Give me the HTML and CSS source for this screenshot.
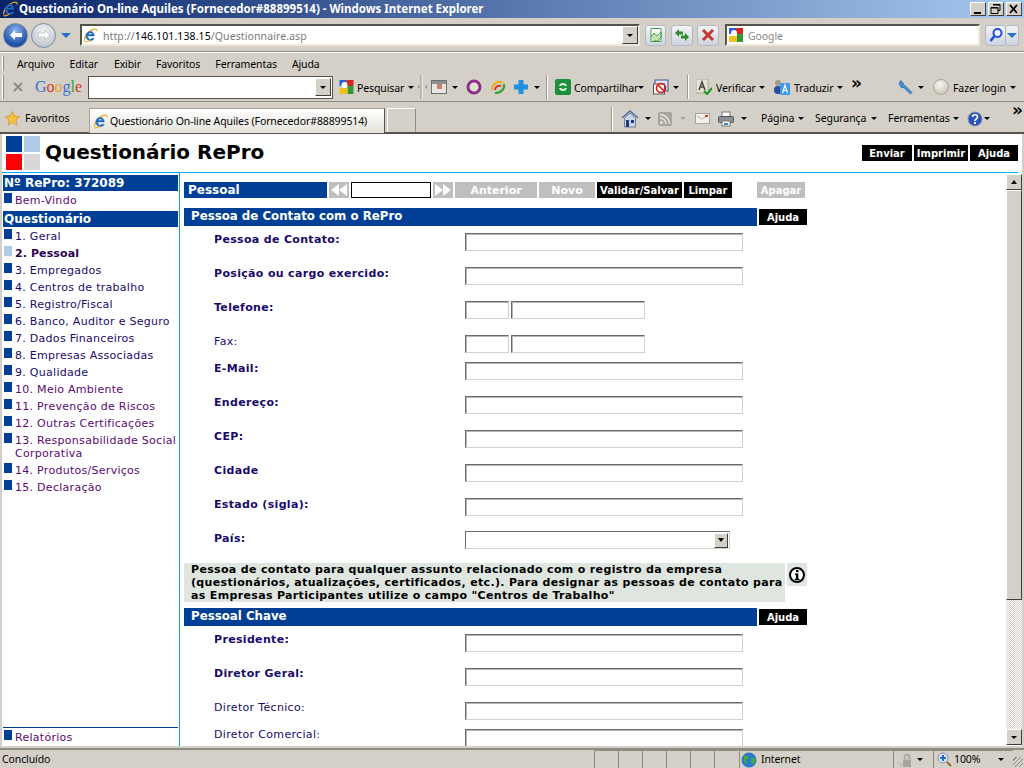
FILE: index.html
```html
<!doctype html>
<html>

<head>
	<meta charset=utf-8>
	<title>Questionário On-line Aquiles (Fornecedor#88899514) - Windows Internet Explorer</title>
	<meta name=viewport content="width=device-width, initial-scale=1">
	<link rel="stylesheet" href="styles.css">
</head>

<body>
	<svg class="defs" width="0" height="0">
		<symbol id="ie" viewBox="0 0 16 16">
			<path d="M2 13.5C.5 11 5 3.5 11 1.5c2.500-.8 4.300-.3 4 2" fill="none" stroke="#e9a81f" stroke-width="1.300"/>
			<path d="M3.500 8.500h8.500c0-3-1.800-4.800-4.300-4.800S3 5.800 3 8.600s2 5 4.800 5c2 0 3.500-1 4.200-2.600H9.400c-.4.700-1 1-1.700 1-1.300 0-2.200-1-2.200-2.500zM5.600 7c.2-1.100 1-1.700 2.100-1.700S9.600 5.900 9.800 7z" fill="#2470c8" stroke="#12509c" stroke-width=".4"/>
			<path d="M1.500 14.500c1.500 1 4-.2 6-1.400" fill="none" stroke="#e9a81f" stroke-width="1.200"/>
		</symbol>
		<symbol id="gicon" viewBox="0 0 16 16">
			<rect x="1" y="1" width="7" height="6" fill="#2a5fd8"/>
			<rect x="8" y="1" width="7" height="6" fill="#d8261c"/>
			<rect x="9" y="7" width="6" height="8" fill="#2e9a34"/>
			<rect x="1" y="9" width="8" height="6" fill="#f2c01e"/>
			<circle cx="6" cy="6" r="3" fill="#fff"/>
		</symbol>
	</svg>

	<header class="titlebar">
		<svg class="ie-title"><use href="#ie"/></svg>
		<span class="titlebar-text">Questionário On-line Aquiles (Fornecedor#88899514) - Windows Internet Explorer</span>
		<div class="winbtns">
			<button class="winbtn"><svg width="16" height="14"><rect x="4" y="10" width="7" height="2"/></svg></button>
			<button class="winbtn"><svg width="16" height="14"><path d="M5 2.500h7v6h-2M3 5.500h7v6H3z" fill="none" stroke="#000" stroke-width="1"/><path d="M5 3h7M3 6h7" stroke="#000"/></svg></button>
			<button class="winbtn"><svg width="16" height="14"><path d="M4 3l7 8M11 3l-7 8" stroke="#000" stroke-width="1.800"/></svg></button>
		</div>
	</header>

	<div class="addressbar">
		<div class="navround back"><svg width="16" height="16" viewBox="0 0 16 16"><path d="M2 8l5-5v3h7v4H7v3z" fill="#fff"/></svg></div>
		<div class="navround forward"><svg width="16" height="16" viewBox="0 0 16 16"><path d="M14 8L9 3v3H2v4h7v3z" fill="#fff" stroke="#a9adb5" stroke-width=".6"/></svg></div>
		<span class="caret caret-blue g5"></span>
		<div class="urlbox g9">
			<svg class="page-ie"><use href="#ie"/></svg>
			<span class="url">http://<b>146.101.138.15</b>/Questionnaire.asp</span>
			<span class="combo-btn"><span class="caret"></span></span>
		</div>
		<div class="pill g5"><svg width="16" height="16" viewBox="0 0 16 16"><path d="M3 1.500h10v13H3z" fill="#fff" stroke="#4b9c4b"/><path d="M3 10l3-4 3 3 4-4v5l-3 4H5" fill="#bfe6b2" stroke="#2d8a2d" stroke-width=".8"/></svg></div>
		<div class="pill pill-wide g5"><svg width="18" height="16" viewBox="0 0 18 16"><path d="M2 6l4-4v2.500h4v3H6V10zM16 10l-4 4v-2.500H8v-3h4V6z" fill="#2e8b2e"/></svg></div>
		<div class="pill pill-wide g4"><svg width="14" height="14" viewBox="0 0 14 14"><path d="M2 2l10 10M12 2L2 12" stroke="#c0392b" stroke-width="3"/></svg></div>
		<div class="searchbox g6">
			<svg class="gicon-s"><use href="#gicon"/></svg>
			<span class="searchhint">Google</span>
		</div>
		<div class="pill g5"><svg width="16" height="16" viewBox="0 0 16 16"><circle cx="9.500" cy="6" r="4" fill="#fff" stroke="#1d50d8" stroke-width="2"/><path d="M6.500 9l-4 5" stroke="#1d50d8" stroke-width="2.500"/></svg></div>
		<div class="pill pill-arrow"><span class="caret caret-blue"></span></div>
	</div>

	<nav class="toolbar menubar">
		<span class="grip"></span>
		<a class="menu-item">Arquivo</a>
		<a class="menu-item">Editar</a>
		<a class="menu-item">Exibir</a>
		<a class="menu-item">Favoritos</a>
		<a class="menu-item">Ferramentas</a>
		<a class="menu-item">Ajuda</a>
	</nav>

	<div class="toolbar gbar">
		<span class="grip"></span>
		<svg class="g9" width="10" height="10" viewBox="0 0 10 10"><path d="M1 1l8 8M9 1L1 9" stroke="#8c8c84" stroke-width="2"/></svg>
		<span class="glogo g12"><i class="c-b">G</i><i class="c-r">o</i><i class="c-y">o</i><i class="c-b">g</i><i class="c-g">l</i><i class="c-r">e</i></span>
		<div class="gsearch g5"><span class="combo-btn"><span class="caret"></span></span></div>
		<svg class="ic g5" width="17" height="16"><use href="#gicon"/></svg>
		<span class="tb-text w48 g2">Pesquisar</span>
		<span class="caret g3"></span>
		<svg class="g4" width="9" height="24" viewBox="0 0 9 24"><path d="M4 0v24" stroke="#fff"/><path d="M3 0v24" stroke="#9c988f"/><path d="M2 12l-2-2v4zM7 12l2-2v4z" fill="#8c8c84"/></svg>
		<svg class="ic g4" width="16" height="16" viewBox="0 0 16 16"><rect x=".5" y="1.500" width="15" height="13" fill="#e8e6e1" stroke="#6f6f6f"/><rect x="1" y="2" width="14" height="3" fill="#8b8f96"/><rect x="6" y="5" width="5" height="5" fill="#c97f6a"/></svg>
		<span class="caret g5"></span>
		<svg class="g8" width="16" height="16" viewBox="0 0 16 16"><circle cx="8" cy="8" r="6" fill="#e6e0cf" stroke="#8c2e8c" stroke-width="3"/></svg>
		<svg class="g8" width="16" height="16" viewBox="0 0 16 16"><path d="M2 11C2 5 8 1 13 4" fill="none" stroke="#e8b21e" stroke-width="2.200"/><path d="M14 5c1 5-3 9-9 9" fill="none" stroke="#3aa03a" stroke-width="2.200"/><path d="M5 11c0-3 3-5 6-4" fill="none" stroke="#d8362a" stroke-width="2"/></svg>
		<svg class="g7" width="16" height="16" viewBox="0 0 16 16"><path d="M5.500 1h5v4.500H15v5h-4.500V15h-5v-4.500H1v-5h4.500z" fill="#1f8fe0"/></svg>
		<span class="caret g5"></span>
		<span class="sep g6"></span>
		<svg class="g7" width="16" height="16" viewBox="0 0 16 16"><rect width="16" height="16" rx="2" fill="#1c8f3a"/><circle cx="8" cy="8" r="3" fill="none" stroke="#d8f2d8" stroke-width="2"/><path d="M1 8h14" stroke="#1c8f3a" stroke-width="2"/></svg>
		<span class="tb-text w61 g3">Compartilhar</span>
		<span class="caret g3"></span>
		<svg class="g9" width="16" height="16" viewBox="0 0 16 16"><rect x="2" y="1" width="13" height="11" fill="#dfe5f2" stroke="#39528f"/><rect x=".5" y="5" width="11" height="10" fill="#fff" stroke="#555"/><circle cx="8" cy="9" r="4.500" fill="none" stroke="#e01818" stroke-width="1.600"/><path d="M5 6l6 6" stroke="#e01818" stroke-width="1.600"/></svg>
		<span class="caret g4"></span>
		<span class="sep g8"></span>
		<svg class="g7" width="16" height="16" viewBox="0 0 16 16"><rect y="0" width="12" height="14" fill="#e6e3d6" stroke="#a8a596"/><path d="M3 11l3-8 3 8M4 8h4" fill="none" stroke="#45453f" stroke-width="1.500"/><path d="M8 12l3 3 5-6" fill="none" stroke="#239a23" stroke-width="2.200"/></svg>
		<span class="tb-text w38 g4">Verificar</span>
		<span class="caret g5"></span>
		<svg class="g9" width="16" height="16" viewBox="0 0 16 16"><circle cx="4" cy="4" r="3" fill="#a09a88"/><circle cx="4" cy="11" r="4" fill="#234d9c"/><rect x="6" y="4" width="10" height="12" rx="1" fill="#3d9ae8"/><path d="M8.500 14l2.500-8 2.500 8M9.500 11.500h3" fill="none" stroke="#fff" stroke-width="1.200"/></svg>
		<span class="tb-text w38 g4">Traduzir</span>
		<span class="caret g5"></span>
		<span class="chev g8">»</span>
		<svg class="g35" width="16" height="16" viewBox="0 0 16 16"><path d="M2.500 1.500l3 2.500-.5 2 2 .5 7 7-1.500 1.500-7-6.500-2 .5L1 5z" fill="#3f8fd8" stroke="#20609c" stroke-width=".6"/></svg>
		<span class="caret g4"></span>
		<span class="avatar g9"></span>
		<span class="tb-text w52 g4">Fazer login</span>
		<span class="caret g5"></span>
	</div>

	<div class="toolbar tabbar">
		<svg class="star" width="15" height="15" viewBox="0 0 15 15"><path d="M7.500.5l2.200 4.600 5 .6-3.700 3.400 1 5-4.500-2.500L3 14.100l1-5L.3 5.700l5-.6z" fill="#f6c23c" stroke="#c8912a" stroke-width=".7"/></svg>
		<span class="tb-text w45 g5">Favoritos</span>
		<div class="tab g19"><svg class="page-ie"><use href="#ie"/></svg><span>Questionário On-line Aquiles (Fornecedor#88899514)</span></div>
		<div class="tab-new"></div>
		<span class="sep sep-tall g195"></span>
		<svg class="g9" width="16" height="18" viewBox="0 0 16 18"><path d="M0 8l8-7 8 7" fill="none" stroke="#4a6fa8" stroke-width="1.500"/><path d="M2.500 8v9h11V8L8 3z" fill="#c9d4e6" stroke="#4a5f80" stroke-width=".7"/><rect x="4" y="10" width="3" height="7" fill="#1e3f7a"/><rect x="9" y="10" width="3" height="3" fill="#1e3f7a"/></svg>
		<span class="caret g7"></span>
		<svg class="g7" width="14" height="14" viewBox="0 0 14 14"><rect width="14" height="14" rx="2" fill="#a8a59c"/><circle cx="3.500" cy="10.500" r="1.500" fill="#e8e6e0"/><path d="M2 6a6 6 0 0 1 6 6M2 2.500A9.500 9.500 0 0 1 11.500 12" fill="none" stroke="#e8e6e0" stroke-width="1.500"/></svg>
		<span class="caret caret-pale g8"></span>
		<svg class="g9" width="15" height="11" viewBox="0 0 15 11"><rect x=".5" y=".5" width="14" height="10" fill="#f2f0ec" stroke="#a8a59c"/><path d="M2 3l5 3 5-3" fill="none" stroke="#b8b5ac"/><rect x="10" y="2" width="3" height="2" fill="#cc3a30"/></svg>
		<svg class="g8" width="16" height="16" viewBox="0 0 16 16"><rect x="4" y="1" width="8" height="5" fill="#fff" stroke="#777"/><rect x=".5" y="5.500" width="15" height="6" rx="1" fill="#8b8f96" stroke="#555"/><rect x="4" y="10" width="8" height="5" fill="#fff" stroke="#777"/><rect x="6" y="12" width="4" height="2" fill="#3a8ac8"/></svg>
		<span class="caret g7"></span>
		<span class="tb-text w32 g14">Página</span>
		<span class="caret g5"></span>
		<span class="tb-text w51 g11">Segurança</span>
		<span class="caret g5"></span>
		<span class="tb-text w61 g11">Ferramentas</span>
		<span class="caret g4"></span>
		<svg class="g8" width="16" height="16" viewBox="0 0 16 16"><circle cx="8" cy="8" r="7" fill="#2a52b8" stroke="#8a93a8"/><path d="M5.500 6c0-3 5-3 5 0 0 2-2.500 2-2.500 4" fill="none" stroke="#fff" stroke-width="1.700"/><rect x="7" y="11" width="2" height="2" fill="#fff"/></svg>
		<span class="caret g1"></span>
		<span class="chev chev-top g22">»</span>
	</div>

	<div class="page">
		<div class="page-head">
			<div class="logo"><i class="sq-blue"></i><i class="sq-pale"></i><i class="sq-red"></i><i class="sq-grey"></i></div>
			<h1>Questionário RePro</h1>
			<div class="head-btns">
				<a class="btn btn-enviar">Enviar</a>
				<a class="btn btn-imprimir">Imprimir</a>
				<a class="btn btn-ajuda">Ajuda</a>
			</div>
		</div>

		<div class="page-body">
			<aside class="side">
				<div class="side-head">Nº RePro: 372089</div>
				<ul class="side-list side-first">
					<li><a class="link-old">Bem-Vindo</a></li>
				</ul>
				<div class="side-head">Questionário</div>
				<ul class="side-list">
					<li><a>1. Geral</a></li>
					<li class="current"><a>2. Pessoal</a></li>
					<li><a>3. Empregados</a></li>
					<li><a>4. Centros de trabalho</a></li>
					<li><a>5. Registro/Fiscal</a></li>
					<li><a>6. Banco, Auditor e Seguro</a></li>
					<li><a>7. Dados Financeiros</a></li>
					<li><a>8. Empresas Associadas</a></li>
					<li><a>9. Qualidade</a></li>
					<li><a class="link-old">10. Meio Ambiente</a></li>
					<li><a class="link-old">11. Prevenção de Riscos</a></li>
					<li><a class="link-old">12. Outras Certificações</a></li>
					<li><a class="link-old">13. Responsabilidade Social Corporativa</a></li>
					<li><a class="link-old">14. Produtos/Serviços</a></li>
					<li><a class="link-old">15. Declaração</a></li>
				</ul>
				<ul class="side-list side-foot">
					<li><a class="link-old">Relatórios</a></li>
				</ul>
			</aside>

			<main class="main">
				<div class="steps">
					<div class="steps-title">Pessoal</div>
					<a class="btn btn-off step-arrow"><svg width="18" height="12" viewBox="0 0 18 12"><path d="M9 0v12L1 6zM17 0v12L9 6z" fill="#fff"/></svg></a>
					<input class="step-input" type="text">
					<a class="btn btn-off step-arrow"><svg width="18" height="12" viewBox="0 0 18 12"><path d="M1 0v12l8-6zM9 0v12l8-6z" fill="#fff"/></svg></a>
					<a class="btn btn-off step-prev">Anterior</a>
					<a class="btn btn-off step-new">Novo</a>
					<a class="btn step-save">Validar/Salvar</a>
					<a class="btn step-clear">Limpar</a>
					<a class="btn btn-off step-del">Apagar</a>
				</div>

				<div class="sect">
					<h2>Pessoa de Contato com o RePro</h2>
					<a class="btn sect-help">Ajuda</a>
				</div>
				<div class="fields fields-contact">
					<div class="field"><label class="req">Pessoa de Contato:</label><input type="text"></div>
					<div class="field"><label class="req">Posição ou cargo exercido:</label><input type="text"></div>
					<div class="field"><label class="req">Telefone:</label><input class="ddd" type="text"><input class="phone" type="text"></div>
					<div class="field field-short"><label>Fax:</label><input class="ddd" type="text"><input class="phone" type="text"></div>
					<div class="field"><label class="req">E-Mail:</label><input type="text"></div>
					<div class="field"><label class="req">Endereço:</label><input type="text"></div>
					<div class="field"><label class="req">CEP:</label><input type="text"></div>
					<div class="field"><label class="req">Cidade</label><input type="text"></div>
					<div class="field"><label class="req">Estado (sigla):</label><input type="text"></div>
					<div class="field field-select"><label class="req">País:</label><div class="select"><span class="select-btn"><span class="caret caret-small"></span></span></div></div>
				</div>

				<div class="note">
					<p>Pessoa de contato para qualquer assunto relacionado com o registro da empresa (questionários, atualizações, certificados, etc.). Para designar as pessoas de contato para as Empresas Participantes utilize o campo "Centros de Trabalho"</p>
					<div class="note-icon"><svg width="16" height="16" viewBox="0 0 16 16"><circle cx="8" cy="8" r="7" fill="#fff" stroke="#000" stroke-width="2"/><rect x="7" y="3" width="2.400" height="2.200"/><path d="M6 6.500h3.300v5.300h1.200v1.500H5.800v-1.500H7V8H6z"/></svg></div>
				</div>

				<div class="sect sect-second">
					<h2>Pessoal Chave</h2>
					<a class="btn sect-help">Ajuda</a>
				</div>
				<div class="fields fields-key">
					<div class="field"><label class="req">Presidente:</label><input type="text"></div>
					<div class="field"><label class="req">Diretor Geral:</label><input type="text"></div>
					<div class="field field-short"><label>Diretor Técnico:</label><input type="text"></div>
					<div class="field"><label>Diretor Comercial:</label><input type="text"></div>
				</div>
			</main>

			<div class="scroll">
				<span class="scroll-btn"><span class="caret caret-up"></span></span>
				<span class="scroll-thumb"></span>
				<span class="scroll-track"></span>
				<span class="scroll-btn"><span class="caret"></span></span>
			</div>
		</div>
	</div>

	<footer class="status">
		<span class="status-text">Concluído</span>
		<span class="cell"></span><span class="cell"></span><span class="cell"></span><span class="cell"></span><span class="cell"></span><span class="cell"></span>
		<span class="cell cell-zone">
			<svg width="16" height="16" viewBox="0 0 16 16"><circle cx="8" cy="8" r="7.500" fill="#2a78d0"/><path d="M3 4l4-1 1 3-3 2 1 4-3-2zM10 6l4 0 0 4-3 3-1-3z" fill="#4aa83a"/></svg>
			<span>Internet</span>
		</span>
		<span class="cell cell-lock">
			<svg width="16" height="16" viewBox="0 0 16 16"><path d="M1 10l4 4 8-11" fill="none" stroke="#c8c5bc" stroke-width="2.500"/><rect x="6" y="8" width="8" height="7" fill="#a8a59c"/><path d="M7.500 8V5a2.500 2.500 0 0 1 5 0v3" fill="none" stroke="#a8a59c" stroke-width="1.500"/></svg>
			<span class="caret"></span>
		</span>
		<span class="cell cell-zoom">
			<svg width="15" height="15" viewBox="0 0 15 15"><circle cx="6" cy="6" r="5" fill="#dbe9f7" stroke="#7f94b0"/><path d="M6 3v6M3 6h6" stroke="#1f6fd0" stroke-width="2"/><path d="M10 10l4 4" stroke="#a06a2a" stroke-width="2"/></svg>
			<span>100%</span>
			<span class="caret caret-far"></span>
		</span>
		<span class="resize"></span>
	</footer>
</body>
</html>
```

FILE: styles.css
```css
html, body{
	width: 100%;
	height: 100%;
	margin: 0; padding: 0;
	overflow: hidden;
}

*, *:after, *:before{
	box-sizing: border-box;
}

body{
	display: flex;
	flex-direction: column;
	background-color: #d4d0c8;
	color: #000;
	font: 10.500px/13px "Noto Sans", "Liberation Sans", sans-serif;
	letter-spacing: -.1px;
}

.defs{
	position: absolute;
}

svg{
	display: block;
	flex: none;
}

/* spacing between toolbar items */
.g1{ margin-left: 1px; }
.g2{ margin-left: 2px; }
.g3{ margin-left: 3px; }
.g4{ margin-left: 4px; }
.g5{ margin-left: 5px; }
.g6{ margin-left: 6px; }
.g7{ margin-left: 7px; }
.g8{ margin-left: 8px; }
.g9{ margin-left: 9px; }
.g11{ margin-left: 11px; }
.g12{ margin-left: 12px; }
.g14{ margin-left: 14px; }
.g19{ margin-left: 19px; }
.g22{ margin-left: 22px; }
.g35{ margin-left: 35px; }
.g195{ margin-left: 195px; }

.w32{ width: 32px; }
.w38{ width: 38px; }
.w45{ width: 45px; }
.w48{ width: 48px; }
.w51{ width: 51px; }
.w52{ width: 52px; }
.w61{ width: 61px; }

.caret{
	display: block;
	flex: none;
	width: 0; height: 0;
	border-left: 3px solid transparent;
	border-right: 3px solid transparent;
	border-top: 3px solid #000;
}
.caret-blue{
	border-left-width: 5px;
	border-right-width: 5px;
	border-top: 5px solid #2a6fc8;
}
.caret-pale{ border-top-color: #a8a59c; }
.caret-small{
	border-top-width: 4px;
}
.caret-up{
	border-top: 0;
	border-bottom: 4px solid #000;
}

/* title bar */
.titlebar{
	display: flex;
	flex: none;
	align-items: center;
	height: 18px;
	background: linear-gradient(to right, #0a246a, #a6caf0);
	color: #fff;
	font: bold 11.500px/18px "Noto Sans", sans-serif;
	letter-spacing: 0;
}
.ie-title{
	width: 16px; height: 16px;
	margin-left: 2px;
}
.titlebar-text{
	margin-left: 1px;
	white-space: nowrap;
}
.winbtns{
	display: flex;
	gap: 2px;
	margin-left: auto;
	margin-right: 2px;
}
.winbtn{
	width: 16px; height: 14px;
	padding: 0;
	background-color: #d4d0c8;
	border: 1px solid;
	border-color: #fff #404040 #404040 #fff;
}
.winbtn svg{
	margin: -1px;
}

/* address row */
.addressbar{
	display: flex;
	flex: none;
	align-items: center;
	height: 34px;
	padding: 0 0 0 3px;
}
.navround{
	display: flex;
	align-items: center;
	justify-content: center;
	width: 25px; height: 25px;
	border-radius: 50%;
	border: 1px solid #7b8aa0;
}
.back{
	background: radial-gradient(circle at 50% 30%, #8fb5ec, #1d4fa8 70%);
}
.forward{
	margin-left: 3px;
	background: radial-gradient(circle at 50% 30%, #f0f2f4, #b4bcc8);
}
.urlbox{
	display: flex;
	align-items: center;
	width: 560px; height: 22px;
	background-color: #fff;
	border: 2px solid;
	border-color: #55534e #ece9d8 #ece9d8 #55534e;
	color: #7a7a7a;
}
.page-ie{
	width: 15px; height: 15px;
	margin-left: 1px;
}
.url{
	margin-left: 5px;
	margin-top: 2px;
	letter-spacing: .1px;
}
.url b{
	font-weight: normal;
	color: #000;
}
.combo-btn{
	display: flex;
	align-items: center;
	justify-content: center;
	margin-left: auto;
	width: 16px; height: 18px;
	background-color: #d4d0c8;
	border: 1px solid;
	border-color: #fff #404040 #404040 #fff;
}
.pill{
	display: flex;
	align-items: center;
	justify-content: center;
	width: 21px; height: 21px;
	border: 1px solid #b5b8c2;
	border-radius: 3px;
	background: linear-gradient(#f2f3f6, #cdd3e0);
}
.pill-wide{
	width: 22px;
}
.pill-arrow{
	width: 13px;
	border-left: 0;
}
.searchbox{
	display: flex;
	align-items: center;
	width: 255px; height: 22px;
	background-color: #fff;
	border: 2px solid;
	border-color: #55534e #ece9d8 #ece9d8 #55534e;
	color: #888;
}
.gicon-s{
	width: 16px; height: 16px;
	margin-left: 1px;
}
.searchhint{
	margin-left: 4px;
	margin-top: 2px;
}

/* toolbars */
.toolbar{
	display: flex;
	flex: none;
	align-items: center;
	white-space: nowrap;
}
.grip{
	display: block;
	flex: none;
	width: 2px; height: 15px;
	margin-left: 2px;
	border-left: 1px solid #fff;
	border-right: 1px solid #8c8c84;
}
.menubar{
	height: 21px;
	border-top: 1px solid #fff;
	box-shadow: 0 -1px 0 #8c8c84;
}
.menu-item{
	margin-left: 15px;
	margin-top: 2px;
}
.menu-item:nth-child(2){ margin-left: 13px; }
.menu-item:nth-child(4){ margin-left: 16px; }

.gbar{
	height: 29px;
	border-bottom: 1px solid #8c8c84;
}
.gbar .grip{
	height: 24px;
}
.gbar .tb-text{
	margin-top: 2px;
}
.glogo{
	width: 48px;
	font: 16px/20px "Liberation Serif", serif;
	letter-spacing: 0;
}
.glogo i{
	font-style: normal;
}
.c-b{ color: #3a6fd8; }
.c-r{ color: #d8362a; }
.c-y{ color: #e0a81e; }
.c-g{ color: #3aa03a; }

.gsearch{
	display: flex;
	justify-content: flex-end;
	align-items: center;
	width: 245px; height: 23px;
	padding-right: 1px;
	background-color: #fff;
	border: 1px solid #55534e;
}
.tb-text{
	display: block;
	flex: none;
}
.sep{
	display: block;
	flex: none;
	width: 2px; height: 24px;
	border-left: 1px solid #9c988f;
	border-right: 1px solid #fff;
}
.chev{
	width: 12px;
	font: bold 17px/10px "DejaVu Sans", sans-serif;
	margin-top: -8px;
}
.chev-top{
	margin-top: -18px;
}
.avatar{
	display: block;
	flex: none;
	width: 16px; height: 16px;
	border-radius: 50%;
	background: radial-gradient(circle at 40% 30%, #f7f6f0, #bdb9aa);
	border: 1px solid #aaa698;
}

.tabbar{
	height: 32px;
	padding-top: 3px;
	align-items: center;
	border-bottom: 2px solid #55534e;
}
.star{
	margin-left: 5px;
}
.tab{
	display: flex;
	align-items: center;
	align-self: flex-end;
	width: 298px; height: 25px;
	margin-bottom: -1px;
	background: linear-gradient(#fff, #e4e1da);
	border: 1px solid #a8a59c;
	border-bottom: 0;
	border-right-color: #55534e;
}
.tab .page-ie{
	margin-left: 3px;
}
.tab span{
	margin-left: 2px;
}
.tab-new{
	align-self: flex-end;
	width: 29px; height: 24px;
	margin-left: 2px;
	border: 1px solid;
	border-color: #fff #8c8c84 transparent #fff;
}
.sep-tall{
	height: 24px;
}

/* page */
.page{
	display: flex;
	flex: none;
	flex-direction: column;
	height: 612px;
	margin-left: 2px;
	margin-right: 2px;
	background-color: #fff;
	overflow: hidden;
	letter-spacing: 0;
}
.page-head{
	display: flex;
	align-items: center;
	height: 39px;
	flex: none;
	border-bottom: 1px solid #00aeef;
	margin-right: 4px;
	font-family: "DejaVu Sans", sans-serif;
}
.logo{
	display: grid;
	grid-template-columns: 16px 16px;
	grid-template-rows: 16px 16px;
	gap: 2px;
	margin-left: 4px;
}
.logo i{
	display: block;
}
.sq-blue{ background-color: #003f96; }
.sq-pale{ background-color: #aecbe8; }
.sq-red{ background-color: #ff0000; }
.sq-grey{ background-color: #d9d7da; }

h1{
	margin: -2px 0 0 5px;
	font-size: 20px;
	line-height: 24px;
	font-weight: bold;
}
.head-btns{
	display: flex;
	gap: 2px;
	margin-left: auto;
}
.btn{
	display: flex;
	align-items: center;
	justify-content: center;
	flex: none;
	height: 16px;
	background-color: #000;
	color: #fff;
	font-weight: bold;
	font-size: 10px;
	letter-spacing: 0;
}
.btn-off{
	background-color: #bfbfbf;
}
.steps .btn{
	padding-top: 1px;
}
.steps .step-arrow{
	padding-top: 0;
}
.step-prev, .step-new{
	font-size: 11px;
}
.btn-enviar{ width: 50px; }
.btn-imprimir{ width: 54px; }
.btn-ajuda{ width: 48px; }

.page-body{
	display: flex;
	flex: 1;
	min-height: 0;
	font: 11px/13px "DejaVu Sans", sans-serif;
	letter-spacing: .33px;
	color: #1a0a6a;
}

/* left column */
.side{
	display: flex;
	flex-direction: column;
	flex: none;
	width: 176px;
	padding-top: 2px;
	padding-left: 1px;
	letter-spacing: .28px;
}
.side-head{
	height: 16px;
	padding-left: 1px;
	background-color: #003f96;
	color: #fff;
	font-size: 12px;
	line-height: 16px;
	font-weight: bold;
	letter-spacing: 0;
}
.side-list{
	margin: 0;
	padding: 2px 0 0;
	list-style: none;
}
.side-first{
	height: 20px;
}
.side-list li{
	position: relative;
	padding: 1px 0 3px 12px;
	line-height: 13px;
}
.side-list li:before{
	content: "";
	position: absolute;
	left: 1px; top: 0;
	width: 8px; height: 10px;
	background-color: #003f96;
}
.side-list li.current:before{
	background-color: #aecbe8;
}
.side-list li.current{
	font-weight: bold;
	color: #2b004f;
	letter-spacing: .1px;
}
.link-old{
	color: #5a0a72;
}
.side-foot{
	margin-top: auto;
	padding-top: 2px;
	border-top: 1px solid #003f96;
}
.side-foot li{
	padding-bottom: 2px;
}

/* form column */
.main{
	flex: none;
	width: 827px;
	height: 100%;
	padding: 9px 0 0 4px;
	border-left: 1px solid #1e96e0;
	margin-left: 1px;
	overflow: hidden;
}
.steps{
	display: flex;
	margin-bottom: 10px;
}
.steps-title{
	width: 143px; height: 16px;
	padding-left: 4px;
	background-color: #003f96;
	color: #fff;
	font-size: 12px;
	line-height: 17px;
	font-weight: bold;
	letter-spacing: 0;
}
.step-arrow{
	width: 20px;
	margin-left: 2px;
}
.step-input{
	width: 80px; height: 16px;
	margin: 0 0 0 2px;
	padding: 0;
	background-color: #fff;
	border: 1px solid #000;
	border-radius: 0;
}
.step-prev{ width: 82px; margin-left: 2px; }
.step-new{ width: 56px; margin-left: 2px; }
.step-save{ width: 85px; margin-left: 2px; }
.step-clear{ width: 48px; margin-left: 2px; }
.step-del{ width: 48px; margin-left: 25px; }

.sect{
	display: flex;
	align-items: center;
	width: 623px;
}
.sect h2{
	width: 573px; height: 18px;
	margin: 0;
	padding-left: 7px;
	background-color: #003f96;
	color: #fff;
	font-size: 11.800px;
	line-height: 16px;
	font-weight: bold;
	letter-spacing: 0;
}
.sect-help{
	width: 48px;
	margin-left: 2px;
}
.sect-second{
	margin-top: 6px;
}
.fields{
	padding-top: 6px;
}
.fields-key{
	padding-top: 7px;
}
.field{
	display: flex;
	align-items: flex-start;
	height: 34px;
}
.field-short{
	height: 27px;
}
.field-select{
	height: 32px;
}
.field label{
	width: 281px;
	padding-left: 30px;
	line-height: 13px;
}
.fields-contact label{
	padding-top: 1px;
}
.field label.req{
	font-weight: bold;
}
.field input{
	width: 278px; height: 18px;
	margin: 1px 0 0;
	padding: 0;
	background-color: #fff;
	border: 1px solid;
	border-color: #6a6a6a #d4d0c8 #d4d0c8 #6a6a6a;
	border-radius: 0;
	box-shadow: inset 1px 1px 0 #b8b6b0;
}
.field input.ddd{
	width: 44px;
}
.field input.phone{
	width: 134px;
	margin-left: 2px;
}
.select{
	display: flex;
	justify-content: flex-end;
	align-items: center;
	width: 265px; height: 18px;
	padding-right: 1px;
	background-color: #fff;
	border: 1px solid;
	border-color: #6a6a6a #d4d0c8 #d4d0c8 #6a6a6a;
}
.select-btn{
	display: flex;
	align-items: center;
	justify-content: center;
	width: 14px; height: 15px;
	background-color: #d4d0c8;
	border: 1px solid;
	border-color: #fff #404040 #404040 #fff;
}
.note{
	display: flex;
	align-items: flex-start;
	width: 623px;
}
.note p{
	width: 601px;
	margin: 0;
	padding: 0 0 0 7px;
	background-color: #dfe5df;
	color: #000;
	font-weight: bold;
	line-height: 13px;
	letter-spacing: .34px;
}
.note-icon{
	display: flex;
	align-items: center;
	justify-content: center;
	width: 20px; height: 23px;
	margin-left: 2px;
	background-color: #dfe5df;
}

/* scrollbar */
.scroll{
	display: flex;
	flex-direction: column;
	flex: none;
	width: 16px;
	padding-top: 1px;
	padding-bottom: 1px;
}
.scroll-btn{
	display: flex;
	align-items: center;
	justify-content: center;
	flex: none;
	height: 16px;
	background-color: #d4d0c8;
	border: 1px solid;
	border-color: #fff #404040 #404040 #fff;
}
.scroll-thumb{
	display: block;
	flex: none;
	height: 410px;
	background-color: #d4d0c8;
	border: 1px solid;
	border-color: #fff #404040 #404040 #fff;
}
.scroll-track{
	display: block;
	flex: 1;
	background: repeating-conic-gradient(#d4d0c8 0 25%, #fff 0 50%) 0 0 / 2px 2px;
}

/* status bar */
.status{
	display: flex;
	align-items: center;
	flex: none;
	height: 20px;
	margin-top: 2px;
	border-top: 2px solid #8c8c84;
	white-space: nowrap;
}
.status-text{
	flex: none;
	width: 594px;
	padding-left: 2px;
}
.cell{
	display: flex;
	align-items: center;
	flex: none;
	width: 24px; height: 18px;
	border-left: 1px solid #8c8c84;
	border-top: 1px solid #8c8c84;
}
.cell-zone{
	width: 154px;
	gap: 4px;
	margin-left: 1px;
	padding-left: 1px;
}
.cell-lock{
	width: 40px;
	gap: 4px;
	padding-left: 3px;
}
.cell-zoom{
	width: 80px;
	padding-left: 3px;
	gap: 2px;
}
.caret-far{
	margin-left: 16px;
}
.resize{
	display: block;
	flex: none;
	width: 10px; height: 10px;
	margin-top: 6px;
	background: repeating-linear-gradient(135deg, transparent 0 2px, #8c8c84 2px 3px);
}
```
